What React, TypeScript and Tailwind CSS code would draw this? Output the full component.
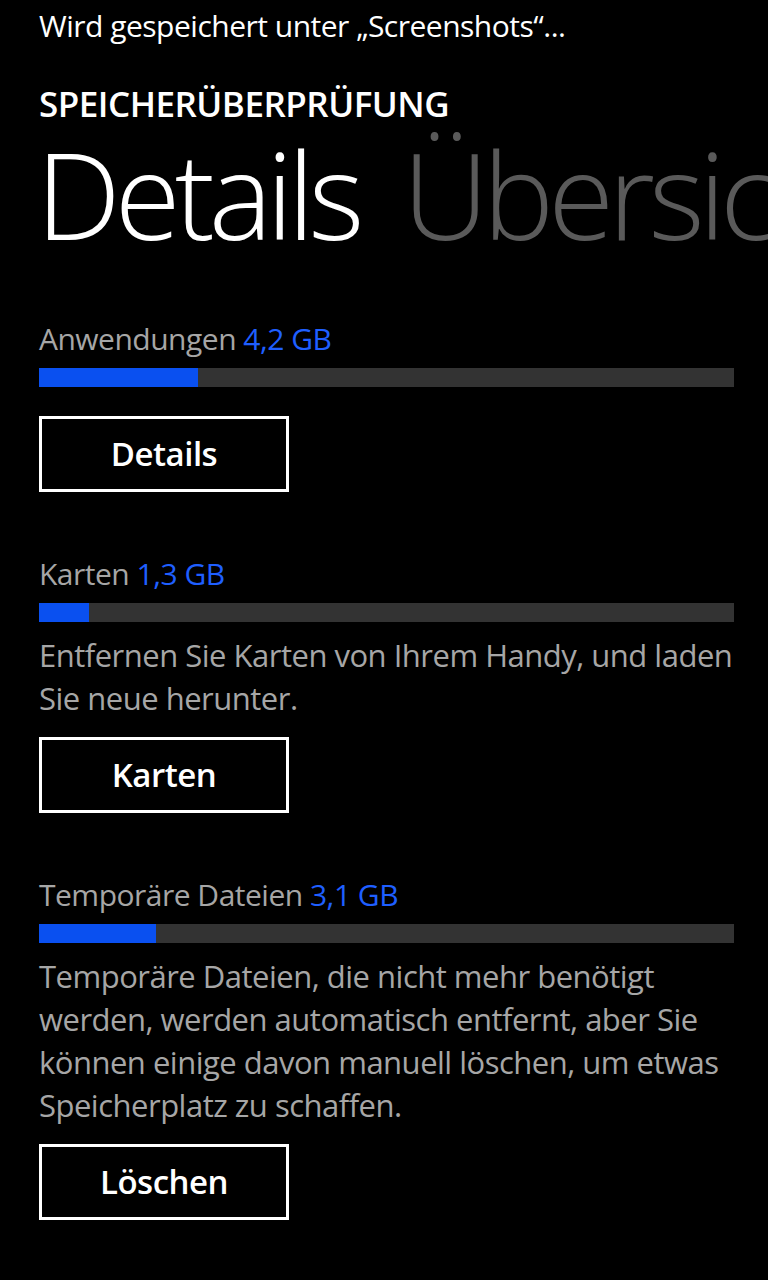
const font = { fontFamily: '"Open Sans", "Noto Sans", sans-serif' };

type SectionProps = {
  label: string;
  size: string;
  fill: number;
  text?: string[];
  button: string;
};

function StorageSection({ label, size, fill, text, button }: SectionProps) {
  return (
    <section className="flex flex-col">
      <p className="h-[40px] whitespace-nowrap text-[30px] leading-[40px] tracking-[-0.5px] text-[#a6a6a6]">
        {label} <span className="text-[#1f5fff]">{size}</span>
      </p>
      <div className="mt-[9px] flex h-[19px] w-[695px] bg-[#333333]">
        <div className="h-full bg-[#0a50f0]" style={{ width: fill }} />
      </div>
      {text && (
        <p className="mt-[12px] w-[720px] text-[31px] leading-[43px] tracking-[-0.5px] text-[#a6a6a6]">
          {text.map((line) => (
            <span className="block whitespace-nowrap" key={line}>
              {line}
            </span>
          ))}
        </p>
      )}
      <button
        className={`flex h-[76px] w-[250px] items-center justify-center border-[3px] border-white text-[33px] font-semibold tracking-[-0.5px] text-white ${
          text ? "mt-[17px]" : "mt-[29px]"
        }`}
        type="button"
      >
        {button}
      </button>
    </section>
  );
}

export default function App() {
  return (
    <div className="h-[1280px] w-[768px] overflow-hidden bg-black pl-[39px]" style={font}>
      <p className="pt-[6px] text-[30px] leading-[40px] tracking-[-0.5px] text-white">
        Wird gespeichert unter „Screenshots“...
      </p>
      <h2 className="mt-[36px] text-[35px] font-semibold leading-[44px] tracking-[-0.5px] text-white">
        SPEICHERÜBERPRÜFUNG
      </h2>
      <h1 className="-ml-[3px] flex gap-[44px] overflow-hidden whitespace-nowrap pt-[6px] text-[120px] font-light leading-[124px] tracking-[-6px] text-white">
        <span>Details</span>
        <span className="text-[#5a5a5a]">Übersicht</span>
      </h1>
      <div className="mt-[63px] flex flex-col gap-[62px]">
        <StorageSection label="Anwendungen" size="4,2 GB" fill={159} button="Details" />
        <StorageSection
          label="Karten"
          size="1,3 GB"
          fill={50}
          text={["Entfernen Sie Karten von Ihrem Handy, und laden", "Sie neue herunter."]}
          button="Karten"
        />
        <StorageSection
          label="Temporäre Dateien"
          size="3,1 GB"
          fill={117}
          text={[
            "Temporäre Dateien, die nicht mehr benötigt",
            "werden, werden automatisch entfernt, aber Sie",
            "können einige davon manuell löschen, um etwas",
            "Speicherplatz zu schaffen.",
          ]}
          button="Löschen"
        />
      </div>
    </div>
  );
}
